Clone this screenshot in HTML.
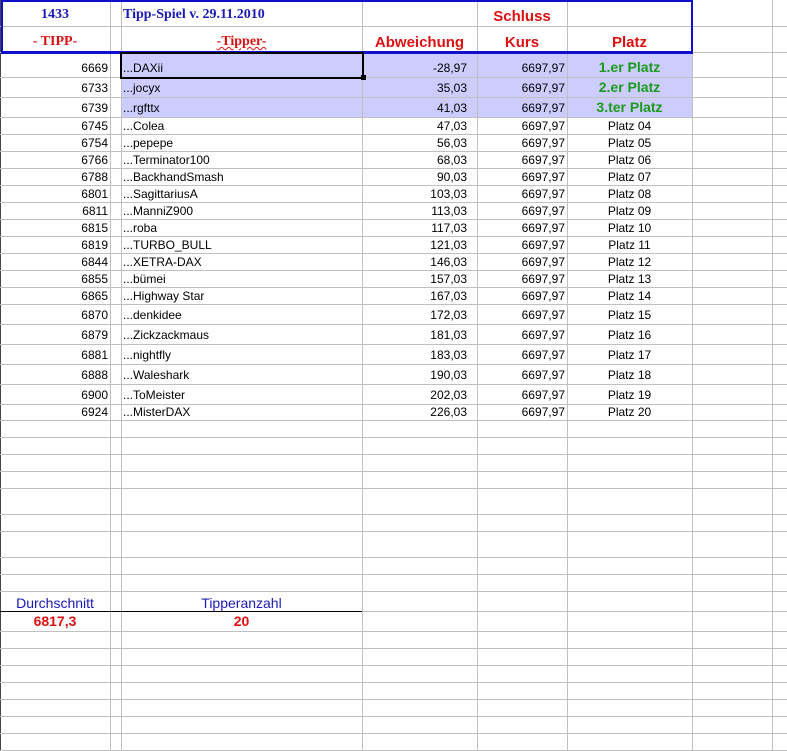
<!DOCTYPE html>
<html><head><meta charset="utf-8"><style>
body{margin:0;width:787px;height:751px;background:#fff;position:relative;overflow:hidden;font-family:"Liberation Sans",Arial,sans-serif;}
.h{position:absolute;left:0;width:787px;height:1px;background:#c0c0c0}
.v{position:absolute;top:0;height:751px;width:1px;background:#c0c0c0}
.t{position:absolute;font-size:12px;color:#000;white-space:nowrap;line-height:14px}
.r{text-align:right}.c{text-align:center}
.hl{position:absolute;left:121px;width:571px;top:52px;height:65px;background:#ccccff}
.g{color:#1a9a1a;font-weight:bold;font-size:14px;line-height:16px}
.rb{color:#dd1111;font-weight:bold;font-size:15px}
.tm{font-family:"Liberation Serif","Times New Roman",serif;font-weight:bold;font-size:14px}
</style></head><body>
<div class="hl"></div>
<div class="v" style="left:0;background:#444"></div>
<div class="v" style="left:110px"></div>
<div class="v" style="left:121px"></div>
<div class="v" style="left:362px"></div>
<div class="v" style="left:477px"></div>
<div class="v" style="left:567px"></div>
<div class="v" style="left:692px"></div>
<div class="v" style="left:772px"></div>
<div class="h" style="top:26px"></div>
<div class="h" style="top:77px"></div><div class="h" style="top:97px"></div><div class="h" style="top:117px"></div>
<div class="h" style="top:134px"></div><div class="h" style="top:151px"></div><div class="h" style="top:168px"></div>
<div class="h" style="top:185px"></div><div class="h" style="top:202px"></div><div class="h" style="top:219px"></div>
<div class="h" style="top:236px"></div><div class="h" style="top:253px"></div><div class="h" style="top:270px"></div>
<div class="h" style="top:287px"></div><div class="h" style="top:304px"></div><div class="h" style="top:324px"></div>
<div class="h" style="top:344px"></div><div class="h" style="top:364px"></div><div class="h" style="top:384px"></div>
<div class="h" style="top:404px"></div><div class="h" style="top:420px"></div><div class="h" style="top:437px"></div>
<div class="h" style="top:454px"></div><div class="h" style="top:471px"></div><div class="h" style="top:488px"></div>
<div class="h" style="top:514px"></div><div class="h" style="top:531px"></div><div class="h" style="top:557px"></div>
<div class="h" style="top:574px"></div><div class="h" style="top:591px"></div><div class="h" style="top:611px"></div><div class="h" style="top:631px"></div>
<div class="h" style="top:648px"></div><div class="h" style="top:665px"></div><div class="h" style="top:682px"></div>
<div class="h" style="top:699px"></div><div class="h" style="top:716px"></div><div class="h" style="top:733px"></div>
<div class="h" style="top:750px"></div>
<div class="h" style="top:52px"></div>
<div style="position:absolute;left:1px;top:0;width:688px;height:49px;border:2px solid #1010cc;border-bottom-width:3px;background:transparent"></div>
<div class="t c tm" style="left:0;width:110px;top:8px;color:#1a1ab8">1433</div>
<div class="t tm" style="left:123px;top:8px;color:#1a1ab8">Tipp-Spiel v. 29.11.2010</div>
<div class="t c tm" style="left:0;width:110px;top:35px;color:#dd1111">- TIPP-</div>
<div class="t c tm" style="left:121px;width:241px;top:35px;color:#dd1111"><span style="text-decoration:underline wavy #dd1111;text-decoration-thickness:1px">-Tipper-</span></div>
<div class="t c rb" style="left:362px;width:115px;top:34px;line-height:17px">Abweichung</div>
<div class="t c rb" style="left:477px;width:90px;top:8px;line-height:17px">Schluss</div>
<div class="t c rb" style="left:477px;width:90px;top:34px;line-height:17px">Kurs</div>
<div class="t c rb" style="left:567px;width:125px;top:34px;line-height:17px">Platz</div>
<div class="t r" style="left:0;width:108px;top:61px">6669</div><div class="t" style="left:123px;top:61px">...DAXii</div><div class="t r" style="left:362px;width:105px;top:61px">-28,97</div><div class="t r" style="left:477px;width:88px;top:61px">6697,97</div><div class="t c g" style="left:567px;width:125px;top:59px">1.er Platz</div>
<div class="t r" style="left:0;width:108px;top:81px">6733</div><div class="t" style="left:123px;top:81px">...jocyx</div><div class="t r" style="left:362px;width:105px;top:81px">35,03</div><div class="t r" style="left:477px;width:88px;top:81px">6697,97</div><div class="t c g" style="left:567px;width:125px;top:79px">2.er Platz</div>
<div class="t r" style="left:0;width:108px;top:101px">6739</div><div class="t" style="left:123px;top:101px">...rgfttx</div><div class="t r" style="left:362px;width:105px;top:101px">41,03</div><div class="t r" style="left:477px;width:88px;top:101px">6697,97</div><div class="t c g" style="left:567px;width:125px;top:99px">3.ter Platz</div>
<div class="t r" style="left:0;width:108px;top:119px">6745</div><div class="t" style="left:123px;top:119px">...Colea</div><div class="t r" style="left:362px;width:105px;top:119px">47,03</div><div class="t r" style="left:477px;width:88px;top:119px">6697,97</div><div class="t c" style="left:567px;width:125px;top:119px">Platz 04</div>
<div class="t r" style="left:0;width:108px;top:136px">6754</div><div class="t" style="left:123px;top:136px">...pepepe</div><div class="t r" style="left:362px;width:105px;top:136px">56,03</div><div class="t r" style="left:477px;width:88px;top:136px">6697,97</div><div class="t c" style="left:567px;width:125px;top:136px">Platz 05</div>
<div class="t r" style="left:0;width:108px;top:153px">6766</div><div class="t" style="left:123px;top:153px">...Terminator100</div><div class="t r" style="left:362px;width:105px;top:153px">68,03</div><div class="t r" style="left:477px;width:88px;top:153px">6697,97</div><div class="t c" style="left:567px;width:125px;top:153px">Platz 06</div>
<div class="t r" style="left:0;width:108px;top:170px">6788</div><div class="t" style="left:123px;top:170px">...BackhandSmash</div><div class="t r" style="left:362px;width:105px;top:170px">90,03</div><div class="t r" style="left:477px;width:88px;top:170px">6697,97</div><div class="t c" style="left:567px;width:125px;top:170px">Platz 07</div>
<div class="t r" style="left:0;width:108px;top:187px">6801</div><div class="t" style="left:123px;top:187px">...SagittariusA</div><div class="t r" style="left:362px;width:105px;top:187px">103,03</div><div class="t r" style="left:477px;width:88px;top:187px">6697,97</div><div class="t c" style="left:567px;width:125px;top:187px">Platz 08</div>
<div class="t r" style="left:0;width:108px;top:204px">6811</div><div class="t" style="left:123px;top:204px">...ManniZ900</div><div class="t r" style="left:362px;width:105px;top:204px">113,03</div><div class="t r" style="left:477px;width:88px;top:204px">6697,97</div><div class="t c" style="left:567px;width:125px;top:204px">Platz 09</div>
<div class="t r" style="left:0;width:108px;top:221px">6815</div><div class="t" style="left:123px;top:221px">...roba</div><div class="t r" style="left:362px;width:105px;top:221px">117,03</div><div class="t r" style="left:477px;width:88px;top:221px">6697,97</div><div class="t c" style="left:567px;width:125px;top:221px">Platz 10</div>
<div class="t r" style="left:0;width:108px;top:238px">6819</div><div class="t" style="left:123px;top:238px">...TURBO_BULL</div><div class="t r" style="left:362px;width:105px;top:238px">121,03</div><div class="t r" style="left:477px;width:88px;top:238px">6697,97</div><div class="t c" style="left:567px;width:125px;top:238px">Platz 11</div>
<div class="t r" style="left:0;width:108px;top:255px">6844</div><div class="t" style="left:123px;top:255px">...XETRA-DAX</div><div class="t r" style="left:362px;width:105px;top:255px">146,03</div><div class="t r" style="left:477px;width:88px;top:255px">6697,97</div><div class="t c" style="left:567px;width:125px;top:255px">Platz 12</div>
<div class="t r" style="left:0;width:108px;top:272px">6855</div><div class="t" style="left:123px;top:272px">...bümei</div><div class="t r" style="left:362px;width:105px;top:272px">157,03</div><div class="t r" style="left:477px;width:88px;top:272px">6697,97</div><div class="t c" style="left:567px;width:125px;top:272px">Platz 13</div>
<div class="t r" style="left:0;width:108px;top:289px">6865</div><div class="t" style="left:123px;top:289px">...Highway Star</div><div class="t r" style="left:362px;width:105px;top:289px">167,03</div><div class="t r" style="left:477px;width:88px;top:289px">6697,97</div><div class="t c" style="left:567px;width:125px;top:289px">Platz 14</div>
<div class="t r" style="left:0;width:108px;top:308px">6870</div><div class="t" style="left:123px;top:308px">...denkidee</div><div class="t r" style="left:362px;width:105px;top:308px">172,03</div><div class="t r" style="left:477px;width:88px;top:308px">6697,97</div><div class="t c" style="left:567px;width:125px;top:308px">Platz 15</div>
<div class="t r" style="left:0;width:108px;top:328px">6879</div><div class="t" style="left:123px;top:328px">...Zickzackmaus</div><div class="t r" style="left:362px;width:105px;top:328px">181,03</div><div class="t r" style="left:477px;width:88px;top:328px">6697,97</div><div class="t c" style="left:567px;width:125px;top:328px">Platz 16</div>
<div class="t r" style="left:0;width:108px;top:348px">6881</div><div class="t" style="left:123px;top:348px">...nightfly</div><div class="t r" style="left:362px;width:105px;top:348px">183,03</div><div class="t r" style="left:477px;width:88px;top:348px">6697,97</div><div class="t c" style="left:567px;width:125px;top:348px">Platz 17</div>
<div class="t r" style="left:0;width:108px;top:368px">6888</div><div class="t" style="left:123px;top:368px">...Waleshark</div><div class="t r" style="left:362px;width:105px;top:368px">190,03</div><div class="t r" style="left:477px;width:88px;top:368px">6697,97</div><div class="t c" style="left:567px;width:125px;top:368px">Platz 18</div>
<div class="t r" style="left:0;width:108px;top:388px">6900</div><div class="t" style="left:123px;top:388px">...ToMeister</div><div class="t r" style="left:362px;width:105px;top:388px">202,03</div><div class="t r" style="left:477px;width:88px;top:388px">6697,97</div><div class="t c" style="left:567px;width:125px;top:388px">Platz 19</div>
<div class="t r" style="left:0;width:108px;top:405px">6924</div><div class="t" style="left:123px;top:405px">...MisterDAX</div><div class="t r" style="left:362px;width:105px;top:405px">226,03</div><div class="t r" style="left:477px;width:88px;top:405px">6697,97</div><div class="t c" style="left:567px;width:125px;top:405px">Platz 20</div>
<div style="position:absolute;left:120px;top:52px;width:240px;height:23px;border:2px solid #000"></div>
<div style="position:absolute;left:361px;top:75px;width:5px;height:5px;background:#000"></div>
<div style="position:absolute;left:0;top:611px;width:362px;height:1px;background:#000"></div>
<div class="t c" style="left:0;width:110px;top:595px;font-size:14px;line-height:16px;color:#1a1ab8">Durchschnitt</div>
<div class="t c" style="left:121px;width:241px;top:595px;font-size:14px;line-height:16px;color:#1a1ab8">Tipperanzahl</div>
<div class="t c rb" style="left:0;width:110px;top:613px;line-height:16px;font-size:14px">6817,3</div>
<div class="t c rb" style="left:121px;width:241px;top:613px;line-height:16px;font-size:14px">20</div>
</body></html>
